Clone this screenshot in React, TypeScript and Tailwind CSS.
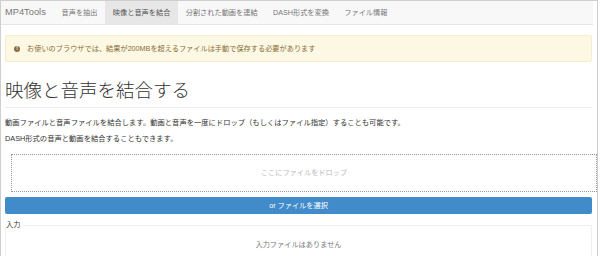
import React from "react";

const FONT = { fontFamily: '"Liberation Sans", "Noto Sans CJK JP", sans-serif' };

export default function App() {
  const navItems = [
    { label: "音声を抽出", active: false },
    { label: "映像と音声を結合", active: true },
    { label: "分割された動画を連結", active: false },
    { label: "DASH形式を変換", active: false },
    { label: "ファイル情報", active: false },
  ];
  return (
    <div className="w-[600px] h-[256px] overflow-hidden bg-white" style={FONT}>
      <div className="w-[598px] h-[260px] border-l border-t border-r border-[#cfcfcf]">
        <div className="w-[592px]">
          {/* Navbar */}
          <nav className="h-[24px] bg-[#f8f8f8] border-b border-[#e7e7e7] flex items-stretch">
            <div className="pl-[4px] pr-[8px] flex items-center text-[9.3px] leading-none text-[#777]">
              MP4Tools
            </div>
            {navItems.map((n) => (
              <div
                key={n.label}
                className={
                  n.active
                    ? "px-[7.7px] flex items-center text-[7.2px] leading-none text-[#555] bg-[#e7e7e7]"
                    : "px-[7.7px] flex items-center text-[7.2px] leading-none text-[#777]"
                }
              >
                {n.label}
              </div>
            ))}
          </nav>

          <div className="pl-[4px] pr-[1px]">
            {/* Alert */}
            <div className="mt-[10px] h-[27px] bg-[#fcf8e3] border border-[#faebcc] rounded-[2px] flex items-center pl-[8px] text-[#8a6d3b] text-[7.2px] leading-none">
              <span className="w-[6px] h-[6px] rounded-full bg-[#8a6d3b] text-white text-[5px] font-bold leading-none flex items-center justify-center mr-[7px]">
                !
              </span>
              <span>お使いのブラウザでは、結果が200MBを超えるファイルは手動で保存する必要があります</span>
            </div>

            {/* Heading */}
            <div className="mt-[19px] pb-[6px] border-b border-[#eee]">
              <h1 className="text-[18.5px] leading-[20px] font-light text-[#333]">映像と音声を結合する</h1>
            </div>

            <p className="mt-[10px] text-[7.3px] leading-[10px] text-[#333]">
              動画ファイルと音声ファイルを結合します。動画と音声を一度にドロップ（もしくはファイル指定）することも可能です。
            </p>
            <p className="mt-[6px] text-[7.3px] leading-[10px] text-[#333]">
              DASH形式の音声と動画を結合することもできます。
            </p>

            {/* Drop zone */}
            <div className="mt-[10px] ml-[6px] w-[586px] h-[38px] border border-dotted border-[#999] flex items-center justify-center text-[7.2px] leading-none text-[#bbb]">
              ここにファイルをドロップ
            </div>

            {/* Button */}
            <div className="mt-[5px] h-[17px] bg-[#428bca] rounded-[2px] flex items-center justify-center text-white text-[7.2px] leading-none">
              or ファイルを選択
            </div>

            {/* Input fieldset */}
            <fieldset className="mt-[6px] border border-[#f0f0f0]">
              <legend className="pr-[4px] text-[7.2px] leading-[10px] text-[#333]">入力</legend>
              <div className="pt-[10px] pb-[10px] text-center text-[7.2px] leading-[10px] text-[#777]">
                入力ファイルはありません
              </div>
            </fieldset>

            <fieldset className="mt-[1px] border border-[#f0f0f0] h-[30px]">
              <legend className="pr-[4px] text-[7.2px] leading-[10px] text-[#333]">出力</legend>
            </fieldset>
          </div>
        </div>
      </div>
    </div>
  );
}
